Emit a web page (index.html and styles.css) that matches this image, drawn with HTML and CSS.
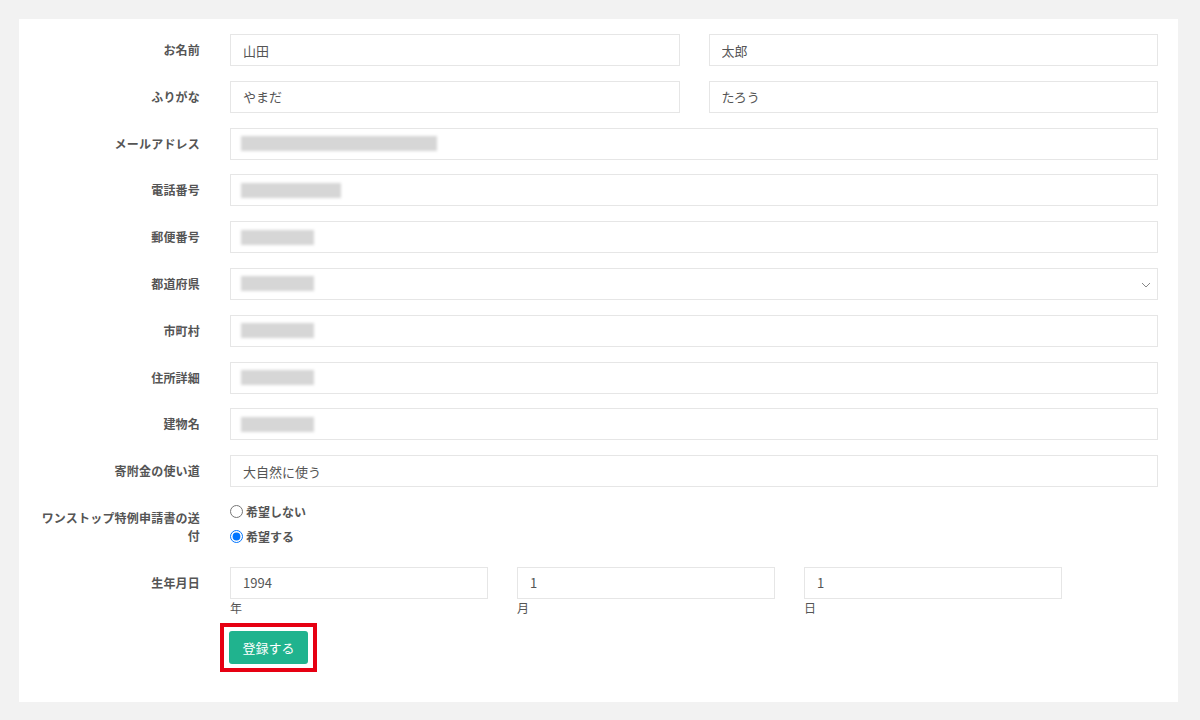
FILE: index.html
```html
<!DOCTYPE html>
<html lang="ja">
<head>
    <meta charset="UTF-8">
    <meta name="viewport" content="width=device-width, initial-scale=1.0">
    <title>会員登録</title>
    <link rel="stylesheet" href="styles.css">
</head>
<body>
    <div class="card">
        <form class="entry-form">
            <div class="form-row">
                <label class="form-label">お名前</label>
                <div class="pair">
                    <input class="field" type="text" value="山田">
                    <input class="field" type="text" value="太郎">
                </div>
            </div>

            <div class="form-row">
                <label class="form-label">ふりがな</label>
                <div class="pair">
                    <input class="field" type="text" value="やまだ">
                    <input class="field" type="text" value="たろう">
                </div>
            </div>

            <div class="form-row">
                <label class="form-label">メールアドレス</label>
                <div class="field"><span class="masked masked-long"></span></div>
            </div>

            <div class="form-row">
                <label class="form-label">電話番号</label>
                <div class="field"><span class="masked masked-mid"></span></div>
            </div>

            <div class="form-row">
                <label class="form-label">郵便番号</label>
                <div class="field"><span class="masked"></span></div>
            </div>

            <div class="form-row">
                <label class="form-label">都道府県</label>
                <div class="field select-field">
                    <span class="masked"></span>
                    <svg class="chevron" width="10" height="6" viewBox="0 0 10 6">
                        <path d="M1 1l4 4 4-4" fill="none" stroke="#888" stroke-width="1"/>
                    </svg>
                </div>
            </div>

            <div class="form-row">
                <label class="form-label">市町村</label>
                <div class="field"><span class="masked"></span></div>
            </div>

            <div class="form-row">
                <label class="form-label">住所詳細</label>
                <div class="field"><span class="masked"></span></div>
            </div>

            <div class="form-row">
                <label class="form-label">建物名</label>
                <div class="field"><span class="masked"></span></div>
            </div>

            <div class="form-row">
                <label class="form-label">寄附金の使い道</label>
                <input class="field" type="text" value="大自然に使う">
            </div>

            <div class="form-row">
                <label class="form-label">ワンストップ特例申請書の送付</label>
                <div class="radio-group">
                    <label class="radio-item"><input type="radio" name="onestop">希望しない</label>
                    <label class="radio-item"><input type="radio" name="onestop" checked>希望する</label>
                </div>
            </div>

            <div class="form-row form-row-tight">
                <label class="form-label">生年月日</label>
                <div class="birth">
                    <div class="birth-col">
                        <input class="field" type="text" value="1994">
                        <span class="unit">年</span>
                    </div>
                    <div class="birth-col">
                        <input class="field" type="text" value="1">
                        <span class="unit">月</span>
                    </div>
                    <div class="birth-col">
                        <input class="field" type="text" value="1">
                        <span class="unit">日</span>
                    </div>
                </div>
            </div>

            <div class="form-row">
                <span></span>
                <div>
                    <span class="highlight"><button type="button" class="submit-button">登録する</button></span>
                </div>
            </div>
        </form>
    </div>
</body>
</html>
```

FILE: styles.css
```css
* {
    margin: 0;
    padding: 0;
    box-sizing: border-box;
    font-family: "Noto Sans CJK JP", "Noto Sans", sans-serif;
}

body {
    background-color: #F2F2F2;
    color: #555;
    padding: 19px 22px 0 19px;
}

.card {
    background: #FFFFFF;
    padding: 15px 20px 30px 16px;
}

.form-row {
    display: grid;
    grid-template-columns: 165px 1fr;
    column-gap: 30px;
    margin-bottom: 14.8px;
}

.form-row:last-child,
.form-row-tight {
    margin-bottom: 0;
}

.form-label {
    font-size: 12px;
    font-weight: bold;
    line-height: 18px;
    padding-top: 7px;
    text-align: right;
    color: #555;
    letter-spacing: 0.2px;
}

.pair {
    display: grid;
    grid-template-columns: 1fr 1fr;
    gap: 29px;
}

.field {
    display: flex;
    align-items: center;
    width: 100%;
    height: 32px;
    border: 1px solid #E6E6E6;
    background: #FFFFFF;
    padding: 0 12px 0 10px;
    font-size: 13px;
    color: #555;
    outline: none;
}

input.field {
    padding-left: 12px;
}

.masked {
    display: inline-block;
    width: 73px;
    height: 15px;
    background: #D6D6D6;
    filter: blur(1.5px);
}

.masked-mid {
    width: 100px;
}

.masked-long {
    width: 196px;
}

.select-field {
    position: relative;
}

.chevron {
    position: absolute;
    right: 6px;
    top: 13px;
}

.radio-group {
    display: flex;
    flex-direction: column;
    gap: 5px;
    padding-bottom: 5px;
}

.radio-item {
    display: flex;
    align-items: center;
    height: 20px;
    font-size: 12px;
    font-weight: bold;
    color: #555;
}

.radio-item input {
    width: 13px;
    height: 13px;
    margin: 0 3px 0 0;
}

.birth {
    display: grid;
    grid-template-columns: repeat(3, 258px);
    column-gap: 29px;
}

.unit {
    display: block;
    font-size: 12px;
    line-height: 18px;
    color: #555;
}

.highlight {
    display: inline-block;
    margin-top: 6px;
    margin-left: -10px;
    border: 4px solid #E60012;
    padding: 4px 5px;
}

.submit-button {
    display: block;
    width: 79px;
    height: 33px;
    background: #20B38E;
    color: white;
    border: none;
    border-radius: 3px;
    font-size: 13px;
    cursor: pointer;
}

.submit-button:hover {
    background: #1A9C7B;
}
```
